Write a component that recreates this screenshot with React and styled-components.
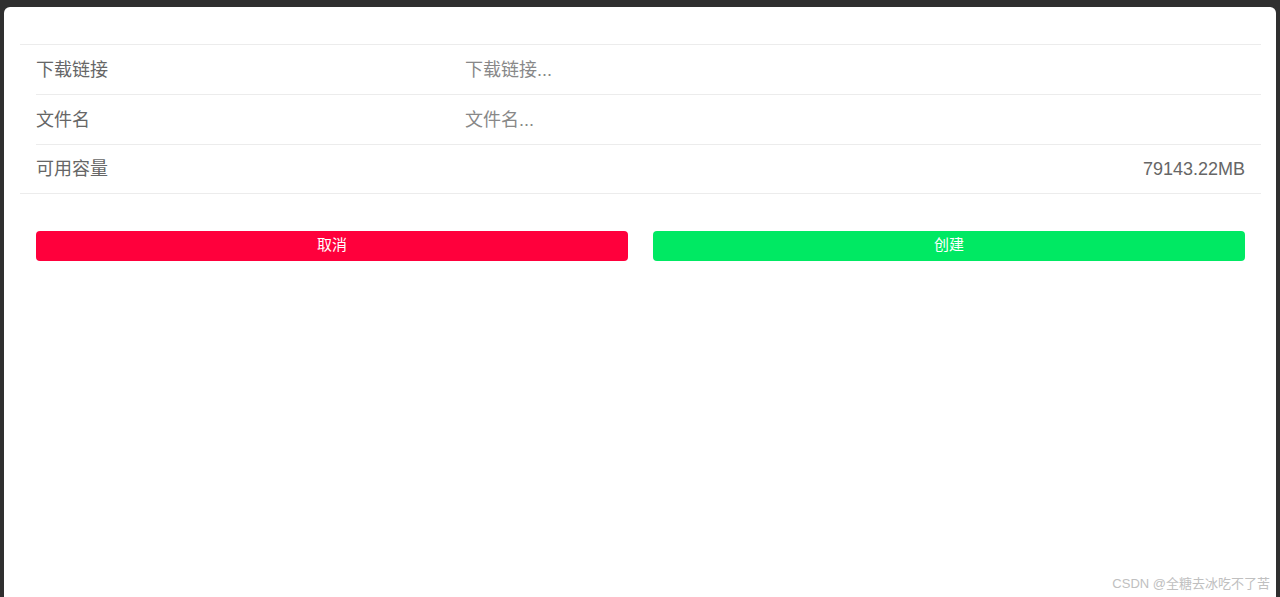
import React from 'react';
import styled, { createGlobalStyle } from 'styled-components';

const GlobalStyle = createGlobalStyle`
  html, body {
    margin: 0;
    padding: 0;
    background: #2f2f2f;
    font-family: "Liberation Sans", "Noto Sans CJK SC", sans-serif;
  }
`;

const Page = styled.div`
  height: 597px;
  padding: 7px 4px 0 4px;
  box-sizing: border-box;
  overflow: hidden;
  position: relative;
`;

const Panel = styled.div`
  background: #fff;
  border-radius: 6px 6px 0 0;
  height: 100%;
  padding-top: 37px;
  box-sizing: border-box;
`;

const List = styled.div`
  margin: 0 15px 0 16px;
  border-top: 1px solid #ececec;
  border-bottom: 1px solid #ececec;
`;

const Row = styled.div`
  display: flex;
  align-items: center;
  height: ${p => p.$h || 49}px;
  padding: 0 16px;
  & + & {
    border-top: 1px solid #ececec;
    margin-left: 16px;
    padding-left: 0;
  }
`;

const Label = styled.div`
  width: 429px;
  flex: none;
  font-size: 18px;
  line-height: 20px;
  color: #666;
`;

const Field = styled.input`
  flex: 1;
  border: none;
  outline: none;
  background: transparent;
  padding: 0;
  font-family: inherit;
  font-size: 18px;
  line-height: 20px;
  color: #555;
  &::placeholder {
    color: #888;
  }
`;

const Value = styled.div`
  flex: 1;
  text-align: right;
  font-size: 18px;
  line-height: 20px;
  color: #666;
`;

const Actions = styled.div`
  display: flex;
  gap: 25px;
  padding: 37px 31px 0 32px;
`;

const Button = styled.button`
  flex: 1;
  display: flex;
  align-items: center;
  justify-content: center;
  height: 30px;
  padding: 0 0 2px;
  border: none;
  border-radius: 4px;
  background: ${p => p.$color};
  color: #fff;
  font-family: inherit;
  font-size: 15px;
  line-height: 16px;
  cursor: pointer;
`;

const Watermark = styled.div`
  position: absolute;
  right: 10px;
  bottom: 5px;
  font-size: 13px;
  color: #c0c0c0;
`;

export default function App() {
  return (
    <Page>
      <GlobalStyle />
      <Panel>
        <List>
          <Row>
            <Label>下载链接</Label>
            <Field placeholder="下载链接..." />
          </Row>
          <Row>
            <Label>文件名</Label>
            <Field placeholder="文件名..." />
          </Row>
          <Row $h={48}>
            <Label>可用容量</Label>
            <Value>79143.22MB</Value>
          </Row>
        </List>
        <Actions>
          <Button $color="#ff003c">取消</Button>
          <Button $color="#00e963">创建</Button>
        </Actions>
      </Panel>
      <Watermark>CSDN @全糖去冰吃不了苦</Watermark>
    </Page>
  );
}
